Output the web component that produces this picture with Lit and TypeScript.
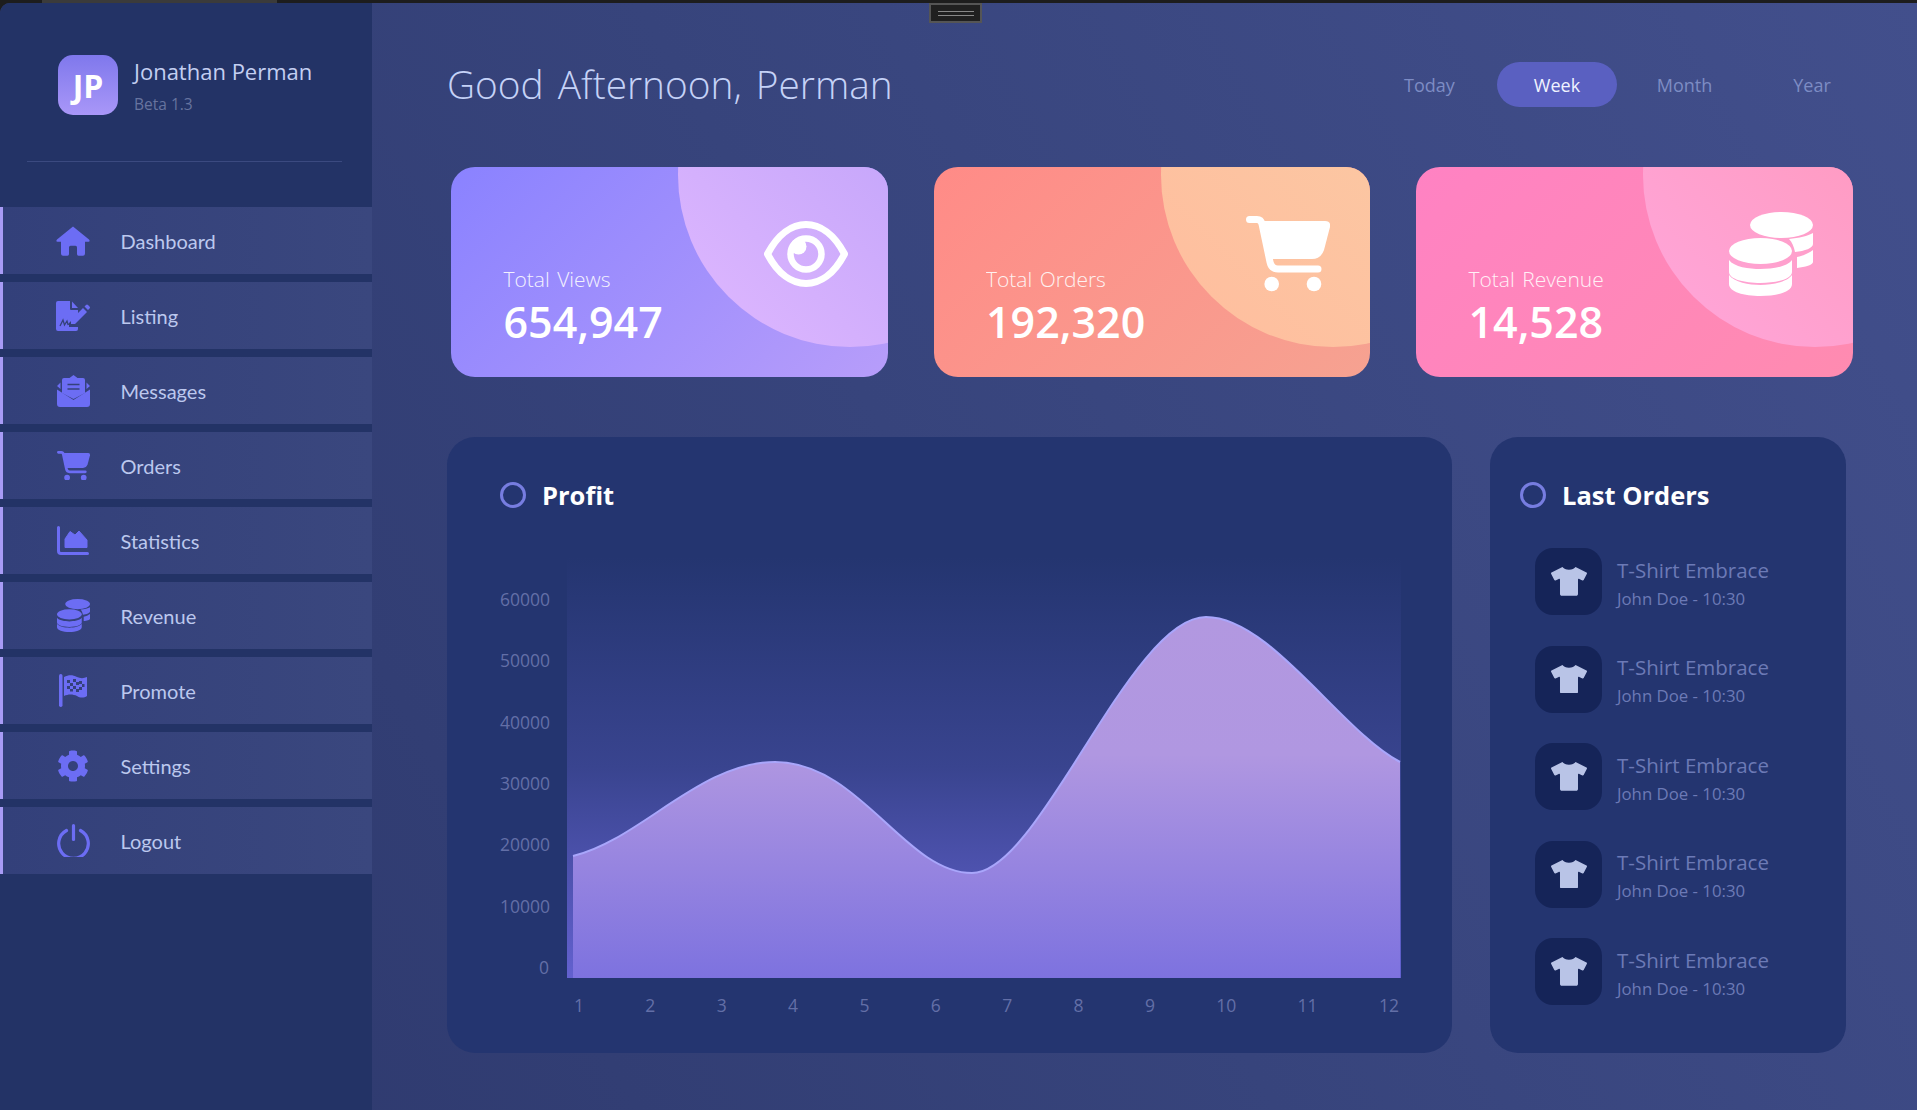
import { LitElement, html, css, svg, unsafeCSS } from 'lit';
import { customElement } from 'lit/decorators.js';

const FONT = unsafeCSS(`"Open Sans", "Noto Sans", sans-serif`);

const icons = {
  home: svg`<svg viewBox="0 0 34 30"><path d="M17 .5 33 13.5Q34.5 15.5 32.5 15.8H29V27.5Q29 29.7 27 29.7H22.5Q21 29.7 21 28V21.5Q21 19.8 19.5 19.8H14.5Q13 19.8 13 21.5V28Q13 29.7 11.5 29.7H7Q5 29.7 5 27.5V15.8H1.5Q-.5 15.5 1 13.5Z"/></svg>`,
  listing: svg`<svg viewBox="0 0 34 30"><path d="M2 0H14V8Q14 9 15 9H22V13L13 22V26H22V28Q22 30 20 30H2Q0 30 0 28V2Q0 0 2 0ZM16 .5 22 7H16Z"/><path class="cut" d="M4 25 7 19 8.5 24 11 20 12 23.5 15 22.5" fill="none" stroke-width="1.3"/><path d="M15 23V19L27 7 31 11 19 23ZM28.5 5.5 30 4Q31 3 32 4L33.5 5.5Q34.5 6.5 33.5 7.5L32 9Z"/></svg>`,
  mail: svg`<svg viewBox="0 0 33 33"><path d="M16.5 1 20.500 4H26Q28 4 28 6V19L16.500 25 5 19V6Q5 4 7 4H12.500Z"/><path d="M3.500 8.500V15L0 12ZM29.500 8.500V15L33 12ZM0 15.500 16.500 26 33 15.500V30Q33 33 30 33H3Q0 33 0 30Z"/><path class="cut" d="M10.500 10.500H22.500M10.500 15H22.500" fill="none" stroke-width="1.600"/></svg>`,
  cart: svg`<svg viewBox="0 0 84 76"><path d="M16 5H79Q85 5 84 11L78 34Q75 43 66 43H24Z"/><path d="M3.500 3.500H11Q15 3.500 16 8L24 46Q25.500 53 32 53H72" fill="none" stroke="currentColor" stroke-width="7" stroke-linecap="round"/><circle cx="25.700" cy="68" r="7.300"/><circle cx="68" cy="68" r="7.300"/></svg>`,
  stats: svg`<svg viewBox="0 0 32 29"><path d="M1.500 1.500V25Q1.500 27.500 4 27.500H30.500" fill="none" stroke="currentColor" stroke-width="3" stroke-linecap="round"/><path d="M8 21.500V13L13 5.500 18 9 22 5 30 14V21.500Z" stroke="currentColor" stroke-width="1" stroke-linejoin="round"/></svg>`,
  coins: svg`<svg viewBox="0 0 84 84"><ellipse cx="52.500" cy="13" rx="31.500" ry="13"/><ellipse cx="31.500" cy="39" rx="31.500" ry="13"/><path d="M0 48C5 55 20 57 31.500 57S58 55 63 48V60C63 67 48 71 31.500 71S0 67 0 60Z"/><path d="M0 63C5 70 20 73 31.500 73S58 70 63 63V72C63 80 48 84 31.500 84S0 80 0 72Z"/><path d="M60 27C70 26 79 24 84 21V32C84 36 76 39 66 40 65 35 63 30 60 27Z"/><path d="M68 45C74 44 80 41 84 38V50C84 53 76 55 68 56Z"/></svg>`,
  flag: svg`<svg viewBox="0 0 28 33"><rect x="0" y="0" width="3.500" height="33" rx="1.700"/><path d="M5 3C10 .5 14 1 18 3 21 4.500 25 4.500 28 3V22C25 24 21 24 18 22 14 20 9 20 5 22Z"/><path class="cutfill" d="M8 6h3v3H8zM14 5h3v3h-3zM20 7h3v3h-3zM11 9h3v3h-3zM17 8h3v3h-3zM23 10h2.500v3H23zM8 12h3v3H8zM14 12h3v3h-3zM20 13h3v3h-3zM17 15h3v3h-3zM11 15h3v2.500h-3z"/></svg>`,
  gear: svg`<svg viewBox="0 0 512 512"><path d="M487.400 315.700l-42.600-24.600c4.300-23.200 4.300-47 0-70.200l42.600-24.600c4.900-2.800 7.100-8.600 5.500-14-11.100-35.600-30-67.800-54.700-94.600-3.800-4.100-10-5.100-14.800-2.300L380.800 110c-17.900-15.400-38.500-27.300-60.800-35.100V25.800c0-5.600-3.900-10.500-9.400-11.700-36.700-8.200-74.300-7.800-109.200 0-5.500 1.200-9.400 6.100-9.400 11.700V75c-22.200 7.900-42.800 19.800-60.800 35.100L88.700 85.500c-4.900-2.800-11-1.900-14.800 2.300-24.700 26.700-43.600 58.900-54.700 94.600-1.700 5.400.6 11.200 5.500 14L67.300 221c-4.300 23.200-4.300 47 0 70.200l-42.600 24.600c-4.900 2.800-7.100 8.600-5.500 14 11.100 35.600 30 67.800 54.700 94.600 3.800 4.100 10 5.100 14.800 2.300l42.600-24.600c17.900 15.400 38.500 27.300 60.800 35.100v49.200c0 5.600 3.900 10.500 9.400 11.700 36.700 8.200 74.300 7.800 109.200 0 5.500-1.200 9.400-6.100 9.400-11.700v-49.200c22.200-7.900 42.800-19.800 60.800-35.100l42.600 24.600c4.900 2.800 11 1.900 14.800-2.300 24.700-26.700 43.600-58.900 54.700-94.600 1.500-5.500-.7-11.300-5.600-14.100zM256 336c-44.100 0-80-35.900-80-80s35.900-80 80-80 80 35.900 80 80-35.900 80-80 80z"/></svg>`,
  power: svg`<svg viewBox="0 0 33 33"><path fill="none" stroke="currentColor" stroke-width="3.200" stroke-linecap="round" d="M9.500 6.500A14.800 14.800 0 1 0 23.500 6.500"/><path fill="none" stroke="currentColor" stroke-width="3.200" stroke-linecap="round" d="M16.500 1.700V15.500"/></svg>`,
  eye: svg`<svg viewBox="0 0 84 66"><path d="M3.500 33C14 13 28 3.500 42 3.500S70 13 80.500 33C70 53 56 62.500 42 62.500S14 53 3.500 33Z" fill="none" stroke="currentColor" stroke-width="7" stroke-linejoin="round"/><circle cx="42" cy="33" r="15.500" fill="none" stroke="currentColor" stroke-width="6.500"/><circle cx="34.500" cy="25.500" r="8"/></svg>`,
  shirt: svg`<svg viewBox="0 0 640 512"><path d="M631.200 96.500L436.500 0C416.400 27.800 371.900 47.200 320 47.200S223.600 27.800 203.500 0L8.800 96.500c-7.900 4-11.100 13.600-7.200 21.500l57.200 114.500c4 7.900 13.600 11.100 21.500 7.200l56.600-27.700c10.600-5.200 23 2.500 23 14.400V480c0 17.700 14.300 32 32 32h256c17.700 0 32-14.300 32-32V226.300c0-11.800 12.400-19.600 23-14.400l56.600 27.700c7.900 4 17.500.8 21.500-7.200L638.300 118c4-7.900.8-17.600-7.100-21.500z"/></svg>`,
};

const NAV = [
  { label: 'Dashboard', icon: icons.home, w: 34 },
  { label: 'Listing', icon: icons.listing, w: 34 },
  { label: 'Messages', icon: icons.mail, w: 33 },
  { label: 'Orders', icon: icons.cart, w: 33 },
  { label: 'Statistics', icon: icons.stats, w: 32 },
  { label: 'Revenue', icon: icons.coins, w: 33 },
  { label: 'Promote', icon: icons.flag, w: 28 },
  { label: 'Settings', icon: icons.gear, w: 32 },
  { label: 'Logout', icon: icons.power, w: 33 },
];

const CARDS = [
  { cls: 'views', label: 'Total Views', value: '654,947', icon: icons.eye },
  { cls: 'orders', label: 'Total Orders', value: '192,320', icon: icons.cart },
  { cls: 'revenue', label: 'Total Revenue', value: '14,528', icon: icons.coins },
];

const PLOT_W = 834;
const PLOT_H = 421;

// profit curve, in plot coordinates (plot origin is 567,557 on the page)
const LINE =
  'M6 299C73 283 133 205 208 205' +
  'C293 205 338 316 405 316' +
  'C473 316 563 60 639 60' +
  'C703 60 773 173 833 205';

@customElement('app-root')
export class AppRoot extends LitElement {
  static styles = css`
    :host {
      display: block;
      width: 1917px;
      height: 1110px;
      background: #1d1d1d;
      font-family: ${FONT};
      overflow: hidden;
    }
    .strip {
      height: 3px;
    }
    .strip span {
      display: block;
      width: 235px;
      height: 3px;
      margin-left: 42px;
      background: #3b3b3b;
    }
    .window {
      position: relative;
      display: flex;
      height: 1107px;
      border-top-left-radius: 10px;
      overflow: hidden;
      background: linear-gradient(60deg, #2d386c 0%, #37447c 50%, #424f8c 100%);
    }
    .handle {
      position: absolute;
      top: 0;
      left: 929px;
      width: 49px;
      height: 16px;
      background: #202020;
      border: 2px solid #555;
      display: flex;
      align-items: center;
      justify-content: center;
    }
    .handle i {
      display: block;
      width: 36px;
      height: 3px;
      border-top: 1px solid #888;
      border-bottom: 1px solid #888;
    }
    .side {
      width: 372px;
      flex: none;
      background: #233366;
    }
    .profile {
      display: flex;
      align-items: flex-start;
      gap: 16px;
      padding: 52px 0 0 58px;
      height: 158px;
      box-sizing: border-box;
    }
    .logo {
      width: 60px;
      height: 60px;
      border-radius: 15px;
      background: linear-gradient(180deg, #7f78ec, #a997f8);
      color: #fff;
      font-size: 32px;
      font-weight: 700;
      display: flex;
      align-items: center;
      justify-content: center;
    }
    .who {
      padding-top: 1px;
    }
    .name {
      font-size: 22px;
      line-height: 30px;
      color: #c3cff2;
    }
    .beta {
      font-size: 15.500px;
      line-height: 22px;
      margin-top: 7px;
      color: #67749f;
    }
    .rule {
      height: 1px;
      margin: 0 30px 0 27px;
      background: #3b4a80;
    }
    nav {
      display: flex;
      flex-direction: column;
      gap: 8px;
      margin-top: 45px;
    }
    .item {
      display: flex;
      align-items: center;
      height: 67px;
      box-sizing: border-box;
      padding-left: 53px;
      border-left: 3px solid #a89bf5;
      background: linear-gradient(90deg, #33407a, #3a477e);
      color: #6c6df4;
    }
    .item .ic {
      width: 34px;
      display: flex;
      justify-content: center;
      flex: none;
    }
    .ic svg {
      display: block;
      width: 100%;
      fill: currentColor;
    }
    .cut {
      stroke: #34417b;
    }
    .cutfill {
      fill: #34417b;
    }
    .item label {
      margin-left: 30.500px;
      font-family: Lato, ${FONT};
      font-size: 20px;
      color: #bcc8ee;
    }
    main {
      flex: 1;
      padding: 59px 0 0 75px;
      min-width: 0;
    }
    header {
      display: flex;
      align-items: center;
      justify-content: space-between;
      height: 45px;
      padding-right: 45px;
    }
    h1 {
      margin: 0 0 2px;
      font-size: 38.800px;
      font-weight: 300;
      word-spacing: 4px;
      color: #c5d2f7;
    }
    .tabs {
      display: flex;
      gap: 7.500px;
    }
    .tab {
      width: 120px;
      height: 45px;
      line-height: 46px;
      text-align: center;
      border-radius: 23px;
      font-size: 18px;
      color: #7d8cc4;
    }
    .tab.on {
      background: #5a60c1;
      color: #f0f3ff;
    }
    .cards {
      display: flex;
      gap: 46px;
      margin: 60px 0 0 4px;
    }
    .card {
      position: relative;
      overflow: hidden;
      width: 436.500px;
      height: 210px;
      flex: none;
      box-sizing: border-box;
      border-radius: 24px;
      padding: 96px 0 0 52.500px;
      color: #fff;
    }
    .card.views { background: linear-gradient(135deg, #8a82ff, #b79dfa); }
    .card.orders { background: linear-gradient(135deg, #ff8b87, #f6a291); }
    .card.revenue { background: linear-gradient(135deg, #ff82c3, #ff8bb0); }
    .blob {
      position: absolute;
      left: 227px;
      top: -164px;
      width: 344px;
      height: 344px;
      border-radius: 50%;
    }
    .views .blob { background: linear-gradient(45deg, #e0b8ff, #c8a8fb 55%); }
    .orders .blob { background: linear-gradient(45deg, #ffbd9e, #fcc6a2 55%); }
    .revenue .blob { background: linear-gradient(45deg, #ffa7dc, #ff9cc4 55%); }
    .card .big {
      position: absolute;
      top: 45px;
      right: 40px;
      width: 84px;
      height: 84px;
      display: flex;
      align-items: center;
    }
    .big svg {
      display: block;
      width: 84px;
      fill: #fff;
      color: #fff;
    }
    .card .lbl {
      position: relative;
      font-size: 21px;
      line-height: 32px;
      font-weight: 300;
      word-spacing: 2px;
      opacity: 0.88;
    }
    .card .val {
      position: relative;
      font-size: 43px;
      line-height: 54px;
      font-weight: 600;
    }
    .panels {
      display: flex;
      gap: 38px;
      margin-top: 60px;
    }
    .panel {
      height: 616px;
      box-sizing: border-box;
      background: #243570;
      border-radius: 28px;
      padding-top: 45px;
    }
    .profit {
      width: 1005px;
      padding-left: 53px;
    }
    .last {
      width: 356px;
      padding-left: 30px;
    }
    .head {
      display: flex;
      align-items: center;
      gap: 16px;
      height: 26px;
      font-size: 25.500px;
      font-weight: 700;
      color: #fff;
    }
    .head i {
      display: block;
      box-sizing: border-box;
      width: 26px;
      height: 26px;
      border: 3px solid #777de0;
      border-radius: 50%;
    }
    .chart {
      display: grid;
      grid-template-columns: 49px ${PLOT_W}px;
      column-gap: 18px;
      margin-top: 49px;
    }
    .yaxis {
      display: flex;
      flex-direction: column;
      justify-content: space-between;
      padding-top: 30px;
      height: 392px;
      text-align: right;
      font-size: 17.500px;
      line-height: 24px;
      color: #636fa7;
    }
    .plot {
      height: ${PLOT_H}px;
      background: linear-gradient(180deg, #243570 0%, #39448f 50%, #6361cf 100%);
    }
    .plot svg {
      display: block;
    }
    .xaxis {
      grid-column: 2;
      display: flex;
      justify-content: space-between;
      margin: 14px 2px 0 7px;
      font-size: 17.500px;
      line-height: 24px;
      color: #636fa7;
    }
    .list {
      display: flex;
      flex-direction: column;
      gap: 30.500px;
      margin: 40px 0 0 15px;
    }
    .order {
      display: flex;
      align-items: center;
      gap: 15px;
    }
    .tile {
      width: 67px;
      height: 67px;
      border-radius: 18px;
      background: #152458;
      display: flex;
      align-items: center;
      justify-content: center;
    }
    .tile svg {
      display: block;
      width: 36px;
      fill: #b9c4e7;
    }
    .otext {
      padding-top: 4px;
    }
    .oname {
      font-size: 20.500px;
      line-height: 27px;
      color: #6c7ab6;
    }
    .osub {
      font-size: 16.800px;
      line-height: 24px;
      margin-top: 3px;
      color: #6c7ab6;
    }
  `;

  render() {
    const area = `${LINE}V${PLOT_H}H6Z`;
    return html`
      <div class="strip"><span></span></div>
      <div class="window">
        <div class="handle"><i></i></div>
        <aside class="side">
          <div class="profile">
            <div class="logo">JP</div>
            <div class="who">
              <div class="name">Jonathan Perman</div>
              <div class="beta">Beta 1.3</div>
            </div>
          </div>
          <div class="rule"></div>
          <nav>
            ${NAV.map(
              (n) => html`<div class="item">
                <span class="ic"><span style="width:${n.w}px">${n.icon}</span></span>
                <label>${n.label}</label>
              </div>`,
            )}
          </nav>
        </aside>
        <main>
          <header>
            <h1>Good Afternoon, Perman</h1>
            <div class="tabs">
              ${['Today', 'Week', 'Month', 'Year'].map(
                (t) => html`<div class="tab ${t === 'Week' ? 'on' : ''}">${t}</div>`,
              )}
            </div>
          </header>
          <section class="cards">
            ${CARDS.map(
              (c) => html`<div class="card ${c.cls}">
                <div class="blob"></div>
                <div class="big">${c.icon}</div>
                <div class="lbl">${c.label}</div>
                <div class="val">${c.value}</div>
              </div>`,
            )}
          </section>
          <section class="panels">
            <div class="panel profit">
              <div class="head"><i></i>Profit</div>
              <div class="chart">
                <div class="yaxis">
                  ${[60000, 50000, 40000, 30000, 20000, 10000, 0].map((v) => html`<span>${v}</span>`)}
                </div>
                <div class="plot">
                  <svg width=${PLOT_W} height=${PLOT_H} viewBox="0 0 ${PLOT_W} ${PLOT_H}">
                    <defs>
                      <linearGradient id="fill" gradientUnits="userSpaceOnUse" x1="0" y1="60" x2="0" y2=${PLOT_H}>
                        <stop offset="0" stop-color="#b298e0" />
                        <stop offset="0.38" stop-color="#b097e1" />
                        <stop offset="1" stop-color="#7d72df" />
                      </linearGradient>
                    </defs>
                    <path d=${area} fill="url(#fill)" />
                    <path d=${LINE} fill="none" stroke="#a9a6fb" stroke-width="2" />
                  </svg>
                </div>
                <div class="xaxis">
                  ${[1, 2, 3, 4, 5, 6, 7, 8, 9, 10, 11, 12].map((v) => html`<span>${v}</span>`)}
                </div>
              </div>
            </div>
            <div class="panel last">
              <div class="head"><i></i>Last Orders</div>
              <div class="list">
                ${[0, 1, 2, 3, 4].map(
                  () => html`<div class="order">
                    <div class="tile">${icons.shirt}</div>
                    <div class="otext">
                      <div class="oname">T-Shirt Embrace</div>
                      <div class="osub">John Doe - 10:30</div>
                    </div>
                  </div>`,
                )}
              </div>
            </div>
          </section>
        </main>
      </div>
    `;
  }
}
